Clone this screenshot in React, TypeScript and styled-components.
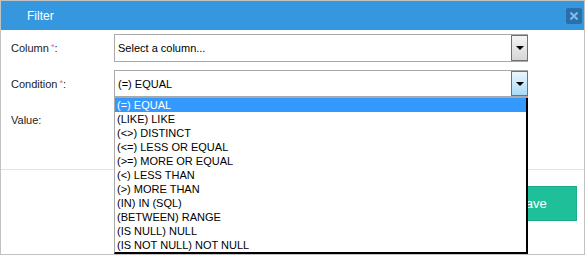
import React from "react";
import styled, { createGlobalStyle } from "styled-components";

const GlobalStyle = createGlobalStyle`
  html, body {
    margin: 0;
    padding: 0;
    background: #ffffff;
  }
  body {
    font-family: "Liberation Sans", Arial, sans-serif;
    font-size: 11px;
    color: #111;
  }
`;

const conditions = [
  "(=) EQUAL",
  "(LIKE) LIKE",
  "(<>) DISTINCT",
  "(<=) LESS OR EQUAL",
  "(>=) MORE OR EQUAL",
  "(<) LESS THAN",
  "(>) MORE THAN",
  "(IN) IN (SQL)",
  "(BETWEEN) RANGE",
  "(IS NULL) NULL",
  "(IS NOT NULL) NOT NULL",
];

const Modal = styled.div`
  width: 585px;
  height: 255px;
  box-sizing: border-box;
  border: 1px solid #c2c2c2;
  background: #fff;
  display: flex;
  flex-direction: column;
  overflow: hidden;
`;

const Header = styled.div`
  height: 29px;
  flex: none;
  background: #3597de;
  display: flex;
  align-items: center;
  justify-content: space-between;
  padding: 0 2px 0 26px;
  color: #fff;
  font-size: 12px;
`;

const CloseButton = styled.button`
  width: 16px;
  height: 16px;
  padding: 0;
  border: none;
  border-radius: 2px;
  background: #2b6ea8;
  display: flex;
  align-items: center;
  justify-content: center;
  cursor: pointer;
`;

const Body = styled.div`
  height: 140px;
  flex: none;
  box-sizing: border-box;
  border-bottom: 1px solid #e3e3e3;
  padding: 4px 0 0 10px;
`;

const Form = styled.div`
  display: grid;
  grid-template-columns: 103px 414px;
  grid-auto-rows: 28px;
  row-gap: 8px;
  align-items: center;
`;

const Label = styled.label`
  font-size: 11px;
  color: #222;
`;

const Required = styled.span`
  color: #e0689c;
  font-size: 9px;
  vertical-align: 2px;
  margin-left: 2px;
`;

const SelectBox = styled.div<{ $open?: boolean }>`
  position: relative;
  height: 28px;
  box-sizing: border-box;
  border: 1px solid #a9a9a9;
  border-bottom: ${(p) => (p.$open ? "2px solid #a9a9a9" : "1px solid #a9a9a9")};
  background: #fff;
  display: flex;
  align-items: center;
  padding-left: 3px;
`;

const SelectText = styled.span`
  flex: 1;
  font-size: 11px;
  color: #000;
`;

const ArrowButton = styled.span<{ $focus?: boolean }>`
  align-self: stretch;
  width: 15px;
  margin: 0 -1px 0 0;
  border: 1px solid ${(p) => (p.$focus ? "#3c7fb1" : "#707070")};
  background: ${(p) =>
    p.$focus
      ? "linear-gradient(#eaf6fd, #a9daf5)"
      : "linear-gradient(#f4f4f4, #d6d6d6)"};
  display: flex;
  align-items: center;
  justify-content: center;
`;

const Triangle = styled.span`
  width: 0;
  height: 0;
  border-left: 4px solid transparent;
  border-right: 4px solid transparent;
  border-top: 4px solid #000;
`;

const DropList = styled.ul`
  position: absolute;
  top: calc(100% + 2px);
  left: -1px;
  width: 414px;
  box-sizing: border-box;
  margin: 0;
  padding: 0;
  list-style: none;
  background: #fff;
  border-left: 1px solid #a9a9a9;
  border-right: 2px solid #000;
  border-bottom: 2px solid #000;
  z-index: 10;
`;

const Option = styled.li<{ $active?: boolean }>`
  height: 14px;
  line-height: 14px;
  padding-left: 2px;
  font-size: 11px;
  background: ${(p) => (p.$active ? "#3399ff" : "transparent")};
  color: ${(p) => (p.$active ? "#fff" : "#000")};
  white-space: nowrap;
`;

const TextInput = styled.div`
  height: 26px;
  border: 1px solid #a9a9a9;
`;

const Footer = styled.div`
  flex: 1;
  display: flex;
  justify-content: flex-end;
  align-items: flex-start;
  padding: 16px 7px 0 0;
`;

const SaveButton = styled.button`
  width: 90px;
  height: 35px;
  border: 1px solid #1aab88;
  background: #1fbf9a;
  color: #fff;
  font-family: "Liberation Sans", Arial, sans-serif;
  font-size: 13px;
  border-radius: 0;
  cursor: pointer;
`;

function Select({ value, focus, options }: { value: string; focus?: boolean; options?: string[] }) {
  return (
    <SelectBox $open={!!options}>
      <SelectText>{value}</SelectText>
      <ArrowButton $focus={focus}>
        <Triangle />
      </ArrowButton>
      {options && (
        <DropList>
          {options.map((o, i) => (
            <Option key={o} $active={i === 0}>
              {o}
            </Option>
          ))}
        </DropList>
      )}
    </SelectBox>
  );
}

export default function App() {
  return (
    <>
      <GlobalStyle />
      <Modal>
        <Header>
          <span>Filter</span>
          <CloseButton aria-label="Close">
            <svg width="10" height="10" viewBox="0 0 10 10">
              <path d="M1.5 1.5 L8.5 8.5 M8.5 1.5 L1.5 8.5" stroke="#7cb9ec" strokeWidth="2.2" />
            </svg>
          </CloseButton>
        </Header>
        <Body>
          <Form>
            <Label>
              Column<Required>*</Required>:
            </Label>
            <Select value="Select a column..." />
            <Label>
              Condition<Required>*</Required>:
            </Label>
            <Select value="(=) EQUAL" focus options={conditions} />
            <Label>Value:</Label>
            <TextInput />
          </Form>
        </Body>
        <Footer>
          <SaveButton>Save</SaveButton>
        </Footer>
      </Modal>
    </>
  );
}
